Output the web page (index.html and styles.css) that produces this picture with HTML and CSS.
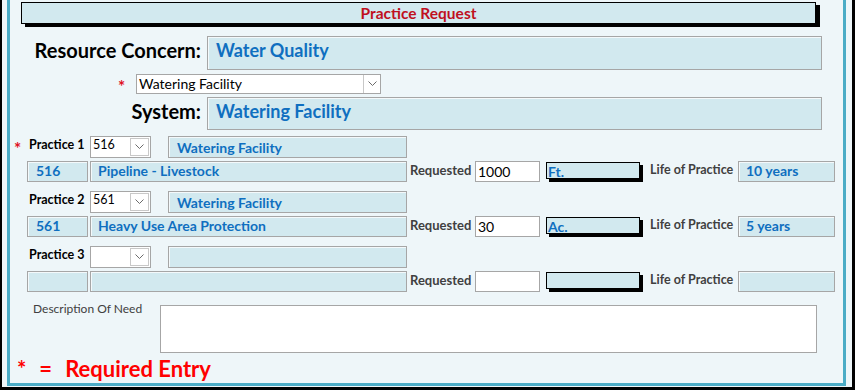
FILE: index.html
```html
<!DOCTYPE html>
<html lang="en">
<head>
    <title>Practice Request</title>
    <meta name="viewport" content="width=device-width, initial-scale=1.0">
    <link rel="stylesheet" href="styles.css">
</head>
<body>
    <div class="frame">
        <div class="section">
            <div class="title">Practice Request</div>

            <div class="big_row first">
                <div class="big_label">Resource Concern:</div>
                <div class="box big_box">Water Quality</div>
            </div>
            <div class="pick_row">
                <span class="req">*</span>
                <div class="combo wide">
                    <span class="combo_text">Watering Facility</span>
                    <span class="drop"><svg width="9" height="6" viewBox="0 0 9 6"><polyline points="0.5,0.5 4.5,4.5 8.5,0.5" fill="none" stroke="#6b6b6b" stroke-width="1"/></svg></span>
                </div>
            </div>
            <div class="big_row">
                <div class="big_label">System:</div>
                <div class="box big_box">Watering Facility</div>
            </div>

            <!-- practice 1 -->
            <div class="line_a first_practice">
                <span class="req_slot"><span class="req">*</span></span>
                <span class="p_label">Practice 1</span>
                <div class="combo small">
                    <span class="combo_text">516</span>
                    <span class="drop"><svg width="9" height="6" viewBox="0 0 9 6"><polyline points="0.5,0.5 4.5,4.5 8.5,0.5" fill="none" stroke="#6b6b6b" stroke-width="1"/></svg></span>
                </div>
                <div class="box sys_box">Watering Facility</div>
            </div>
            <div class="line_b">
                <div class="box code_box">516</div>
                <div class="box name_box">Pipeline - Livestock</div>
                <span class="r_label">Requested</span>
                <div class="qty">1000</div>
                <div class="unit">Ft.</div>
                <span class="l_label">Life of Practice</span>
                <div class="box life_box">10 years</div>
            </div>

            <!-- practice 2 -->
            <div class="line_a">
                <span class="req_slot"></span>
                <span class="p_label">Practice 2</span>
                <div class="combo small">
                    <span class="combo_text">561</span>
                    <span class="drop"><svg width="9" height="6" viewBox="0 0 9 6"><polyline points="0.5,0.5 4.5,4.5 8.5,0.5" fill="none" stroke="#6b6b6b" stroke-width="1"/></svg></span>
                </div>
                <div class="box sys_box">Watering Facility</div>
            </div>
            <div class="line_b">
                <div class="box code_box">561</div>
                <div class="box name_box">Heavy Use Area Protection</div>
                <span class="r_label">Requested</span>
                <div class="qty">30</div>
                <div class="unit">Ac.</div>
                <span class="l_label">Life of Practice</span>
                <div class="box life_box">5 years</div>
            </div>

            <!-- practice 3 -->
            <div class="line_a">
                <span class="req_slot"></span>
                <span class="p_label">Practice 3</span>
                <div class="combo small">
                    <span class="combo_text"></span>
                    <span class="drop"><svg width="9" height="6" viewBox="0 0 9 6"><polyline points="0.5,0.5 4.5,4.5 8.5,0.5" fill="none" stroke="#6b6b6b" stroke-width="1"/></svg></span>
                </div>
                <div class="box sys_box"></div>
            </div>
            <div class="line_b">
                <div class="box code_box"></div>
                <div class="box name_box"></div>
                <span class="r_label">Requested</span>
                <div class="qty"></div>
                <div class="unit"></div>
                <span class="l_label">Life of Practice</span>
                <div class="box life_box"></div>
            </div>

            <div class="desc_row">
                <span class="desc_label">Description Of Need</span>
                <div class="desc_area"></div>
            </div>

            <div class="legend">
                <span>*</span>
                <span class="eq">=</span>
                <span class="legend_text">Required Entry</span>
            </div>
        </div>
    </div>
</body>
</html>
```

FILE: styles.css
```css
html, body {
    margin: 0;
    height: 100%;
}
body {
    background-color: #000;
    display: flex;
    flex-direction: column;
    font-family: Lato, "Open Sans", sans-serif;
}
.frame {
    flex: 1;
    display: flex;
    flex-direction: column;
    margin: 0 3px 3px 2px;
    padding: 0 6px 1px 5px;
    background-color: #eef6f9;
}
.section {
    flex: 1;
    border: 3px solid #4bacc6;
    border-top: none;
    background-color: #eef6f9;
}
.title {
    margin: 2px 27px 0 11px;
    height: 22px;
    box-sizing: border-box;
    border: 1px solid #000;
    box-shadow: 4px 3px 0 #000;
    background-color: #d2e9ef;
    color: #c0101e;
    font-size: 15.5px;
    font-weight: bold;
    line-height: 20px;
    text-align: center;
}
.box {
    box-sizing: border-box;
    border: 1px solid #a6a6a6;
    box-shadow: inset 1px 1px 0 #f4f9fb;
    background-color: #d2e9ef;
    color: #0f6fc0;
    font-weight: bold;
    white-space: nowrap;
    overflow: hidden;
}
.big_row {
    display: flex;
    height: 33px;
    margin-top: 3px;
}
.big_row.first {
    height: 34px;
    margin-top: 12px;
}
.big_label {
    width: 191px;
    margin-right: 6px;
    padding-top: 2px;
    text-align: right;
    font-size: 20px;
    line-height: 24px;
    font-weight: bold;
    color: #000;
}
.big_box {
    width: 615px;
    height: 100%;
    padding: 2px 0 0 8px;
    font-size: 18px;
    line-height: 22px;
}
.req {
    color: #e0101e;
    font-weight: bold;
    font-size: 17px;
    line-height: 16px;
}
.pick_row {
    display: flex;
    align-items: center;
    height: 20px;
    margin-top: 4px;
    padding-left: 108px;
}
.pick_row .req {
    width: 18px;
    padding-top: 6px;
}
.combo {
    display: flex;
    box-sizing: border-box;
    border: 1px solid #a6a6a6;
    background-color: #fff;
    font-size: 14px;
    color: #000;
}
.combo_text {
    flex: 1;
    padding-left: 2px;
}
.drop {
    display: flex;
    align-items: center;
    justify-content: center;
    width: 16px;
    border-left: 1px solid #c8c8c8;
}
.combo.wide {
    width: 245px;
    height: 20px;
    line-height: 18px;
}
.combo.small {
    width: 61px;
    height: 22px;
    line-height: 16px;
    font-size: 12.5px;
}
.combo.small .drop {
    width: 17px;
    border: 1px solid #c8c8c8;
    margin: 1px;
}
.line_a {
    display: flex;
    height: 22px;
    margin-top: 9px;
}
.line_a.first_practice {
    margin-top: 6px;
}
.req_slot {
    width: 19px;
    padding: 3px 0 0 4px;
    box-sizing: border-box;
}
.p_label {
    width: 61px;
    padding-top: 1px;
    font-size: 12.5px;
    line-height: 16px;
    font-weight: bold;
    color: #000;
}
.sys_box {
    width: 239px;
    margin-left: 17px;
    padding: 2px 0 0 8px;
    font-size: 14px;
    line-height: 17px;
}
.line_b {
    display: flex;
    height: 21px;
    margin-top: 3px;
    padding-left: 17px;
}
.line_b .box {
    height: 21px;
    padding-top: 0;
    font-size: 14px;
    line-height: 18px;
}
.code_box {
    width: 61px;
    padding-left: 8px;
}
.name_box {
    width: 317px;
    margin-left: 2px;
    padding-left: 7px;
}
.r_label, .l_label {
    padding-top: 1px;
    font-size: 13px;
    line-height: 16px;
    font-weight: bold;
    color: #404040;
}
.r_label {
    width: 65px;
    margin-left: 3px;
}
.qty {
    width: 65px;
    height: 21px;
    box-sizing: border-box;
    border: 1px solid #a6a6a6;
    background-color: #fff;
    padding: 1px 0 0 2px;
    font-size: 14px;
    line-height: 17px;
    color: #000;
}
.unit {
    width: 94px;
    height: 17px;
    margin: 1px 0 0 6px;
    box-sizing: border-box;
    border: 1px solid #000;
    box-shadow: 3px 3px 0 #000;
    background-color: #d2e9ef;
    padding: 1px 0 0 1px;
    color: #0f6fc0;
    font-size: 14px;
    font-weight: bold;
    line-height: 16px;
}
.l_label {
    width: 88px;
    margin-left: 10px;
    font-size: 12.5px;
}
.life_box {
    width: 97px;
    padding-left: 7px;
}
.desc_row {
    display: flex;
    margin-top: 13px;
}
.desc_label {
    width: 127px;
    margin-top: -4px;
    padding-left: 23px;
    font-size: 12px;
    line-height: 16px;
    color: #404040;
}
.desc_area {
    width: 657px;
    height: 48px;
    box-sizing: border-box;
    border: 1px solid #a6a6a6;
    background-color: #fff;
}
.legend {
    display: flex;
    margin-top: 3px;
    padding-left: 7px;
    color: #ff0000;
    font-size: 22px;
    font-weight: bold;
    line-height: 26px;
}
.eq {
    margin-left: 13px;
}
.legend_text {
    margin-left: 13px;
}
```
